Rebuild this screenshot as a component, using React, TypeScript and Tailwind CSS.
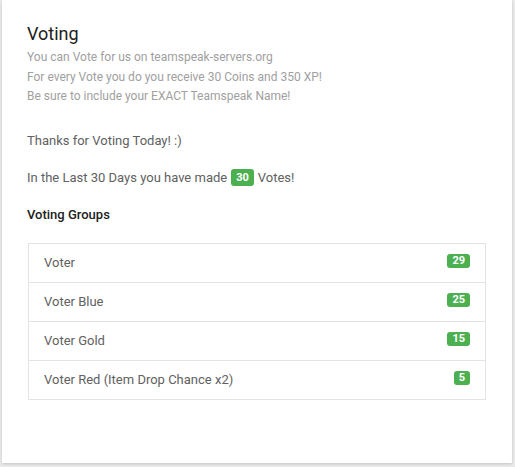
import React from "react";

const groups = [
  { name: "Voter", count: 29 },
  { name: "Voter Blue", count: 25 },
  { name: "Voter Gold", count: 15 },
  { name: "Voter Red (Item Drop Chance x2)", count: 5 },
];

export default function App() {
  return (
    <div
      className="w-[515px] h-[467px] bg-[#ebebeb] pl-[2px]"
      style={{ fontFamily: "Roboto, 'Noto Sans', sans-serif" }}
    >
      <div className="w-[510px] h-[463px] bg-white shadow-[0_1px_3px_rgba(0,0,0,0.18)] pt-5 pl-[25px] pr-[26px]">
        <h2 className="text-[18px] leading-[27px] text-[#212121]">Voting</h2>
        <div className="text-[12px] leading-[19.5px] text-[#a0a0a0] mt-[1px]">
          <p>You can Vote for us on teamspeak-servers.org</p>
          <p>For every Vote you do you receive 30 Coins and 350 XP!</p>
          <p>Be sure to include your EXACT Teamspeak Name!</p>
        </div>
        <p className="mt-[24px] text-[13px] leading-[19.5px] text-[#616161]">
          Thanks for Voting Today! :)
        </p>
        <div className="mt-[18px] flex items-center text-[13px] leading-[19.5px] text-[#616161]">
          <span>In the Last 30 Days you have made</span>
          <span className="ml-[4px] mr-[4px] inline-flex items-center justify-center h-[17px] px-[5px] rounded-[3px] bg-[#4caf50] text-white text-[11px] font-bold leading-[17px]">
            30
          </span>
          <span>Votes!</span>
        </div>
        <h3 className="mt-[17px] text-[13px] leading-[19.5px] font-medium text-[#212121]">
          Voting Groups
        </h3>
        <ul className="mt-[19px] ml-[1px] border border-[#e3e3e3]">
          {groups.map((g, i) => (
            <li
              key={g.name}
              className={`flex items-start justify-between pl-[15px] pr-[15px] py-[9px] ${
                i > 0 ? "border-t border-[#e3e3e3]" : ""
              }`}
            >
              <span className="text-[13px] leading-[20px] text-[#616161]">{g.name}</span>
              <span className="mt-[1px] inline-flex items-center justify-center h-[14px] px-[5px] rounded-[3px] bg-[#4caf50] text-white text-[11px] font-bold leading-[14px]">
                {g.count}
              </span>
            </li>
          ))}
        </ul>
      </div>
    </div>
  );
}
